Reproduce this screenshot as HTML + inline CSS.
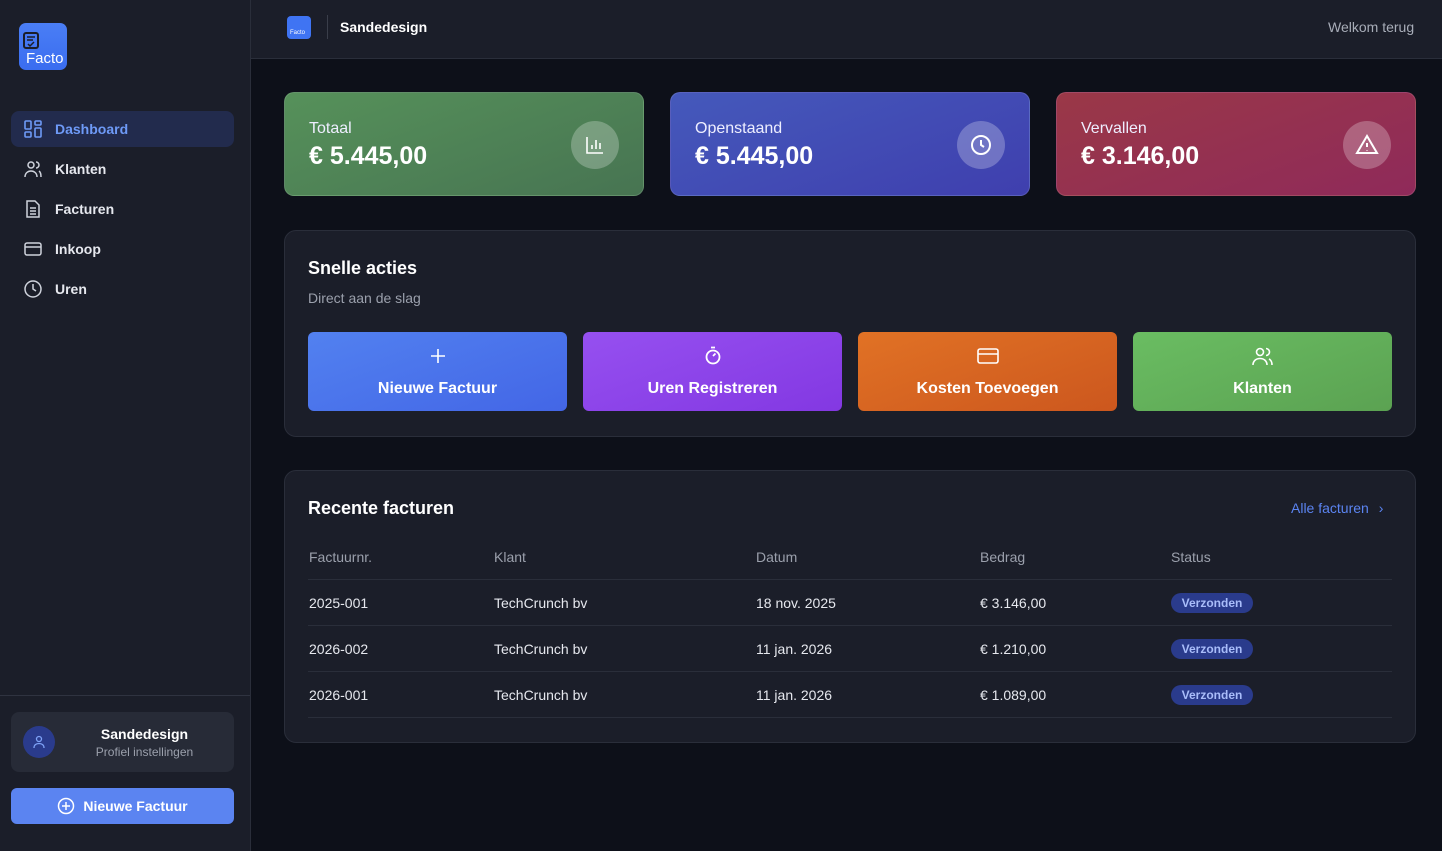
<!DOCTYPE html>
<html><head><meta charset="utf-8"><style>
*{box-sizing:border-box;margin:0;padding:0}
body{width:1442px;height:851px;background:#0d1019;font-family:"Liberation Sans",sans-serif;color:#fff;position:relative;overflow:hidden}
.abs{position:absolute}
.side{left:0;top:0;width:251px;height:851px;background:#1b1e29;border-right:1px solid #2a2e3a}
.nav{left:11px;width:223px;height:36px;border-radius:8px;display:flex;align-items:center;padding-left:12px;font-size:14px;font-weight:bold;color:#e6e8ee}
.nav svg{margin-right:12px}
.hdr{left:251px;top:0;width:1191px;height:59px;background:#1b1e29;border-bottom:1px solid #2a2e3a}
.stat{top:92px;width:360px;height:104px;border-radius:10px;border:1px solid rgba(255,255,255,.12)}
.stat .l{position:absolute;left:24px;top:27px;font-size:16px;color:#eef}
.stat .v{position:absolute;left:24px;top:49px;font-size:25px;font-weight:bold}
.stat .ic{position:absolute;right:24px;top:28px;width:48px;height:48px;border-radius:50%;background:rgba(255,255,255,.25);display:flex;align-items:center;justify-content:center}
.panel{left:284px;width:1132px;background:#1b1e29;border:1px solid #2a2e3a;border-radius:12px}
.btn{top:332px;width:259px;height:79px;border-radius:6px;display:flex;flex-direction:column;align-items:center;justify-content:flex-start;padding-top:14px;font-size:16px;font-weight:bold}
.btn svg{margin-bottom:14px}
.th{top:549px;font-size:14px;color:#9ba0ac}
.td{font-size:14px;color:#e6e8ee}
.line{left:308px;width:1084px;height:1px;background:#2a2e3a}
.badge{left:1171px;width:82px;height:20px;border-radius:10px;background:#2a3b8c;color:#a9bdfa;font-size:12px;font-weight:bold;text-align:center;line-height:20px}
</style></head><body>
<div class="abs side"></div>
<div class="abs" style="left:19px;top:23px;width:48px;height:47px;border-radius:7px;background:linear-gradient(#4a7ef5,#3a6df0)">
<svg class="abs" style="left:4px;top:9px" width="16" height="17" viewBox="0 0 16 17"><rect x="1" y="1" width="14" height="15" rx="2" fill="none" stroke="#1b1e29" stroke-width="2"/><path d="M4 5h8M4 8h6M5 12l2 2 4-4" stroke="#1b1e29" stroke-width="1.5" fill="none"/></svg>
<div class="abs" style="left:7px;top:27px;font-size:15px;color:#fff">Facto</div></div>
<div class="abs nav" style="top:111px;background:#222b4d;color:#6e9af7"><svg width="20" height="20" viewBox="0 0 20 20" fill="none" stroke="#6e9af7" stroke-width="1.6"><rect x="2" y="2" width="6" height="8" rx="1"/><rect x="12" y="2" width="6" height="4" rx="1"/><rect x="2" y="13" width="6" height="5" rx="1"/><rect x="12" y="9" width="6" height="9" rx="1"/></svg>Dashboard</div>
<div class="abs nav" style="top:151px"><svg width="20" height="20" viewBox="0 0 20 20" fill="none" stroke="#cfd3dc" stroke-width="1.5"><circle cx="8" cy="6" r="3"/><path d="M2 18c0-4 3-6 6-6s6 2 6 6M13 3a3 3 0 010 6M16 12c1.5 1 2 3 2 6"/></svg>Klanten</div>
<div class="abs nav" style="top:191px"><svg width="20" height="20" viewBox="0 0 20 20" fill="none" stroke="#cfd3dc" stroke-width="1.5"><path d="M4 2h8l4 4v12H4z M7 9h6M7 12h6M7 15h6"/></svg>Facturen</div>
<div class="abs nav" style="top:231px"><svg width="20" height="20" viewBox="0 0 20 20" fill="none" stroke="#cfd3dc" stroke-width="1.5"><rect x="2" y="4" width="16" height="12" rx="2"/><path d="M2 8h16"/></svg>Inkoop</div>
<div class="abs nav" style="top:271px"><svg width="20" height="20" viewBox="0 0 20 20" fill="none" stroke="#cfd3dc" stroke-width="1.5"><circle cx="10" cy="10" r="8"/><path d="M10 5v5l3 2"/></svg>Uren</div>
<div class="abs" style="left:0;top:695px;width:250px;height:1px;background:#2f3340"></div>
<div class="abs" style="left:11px;top:712px;width:223px;height:60px;border-radius:8px;background:#272b37">
<div class="abs" style="left:12px;top:14px;width:32px;height:32px;border-radius:50%;background:#2a3b8c;display:flex;align-items:center;justify-content:center"><svg width="14" height="14" viewBox="0 0 14 14" fill="none" stroke="#7ea2f7" stroke-width="1.3"><circle cx="7" cy="4" r="2.5"/><path d="M2 13c0-3 2-4.5 5-4.5s5 1.5 5 4.5"/></svg></div>
<div class="abs" style="left:44px;width:179px;top:14px;text-align:center;font-size:14px;font-weight:bold">Sandedesign</div>
<div class="abs" style="left:44px;width:179px;top:33px;text-align:center;font-size:12px;color:#9ba0ac">Profiel instellingen</div></div>
<div class="abs" style="left:11px;top:788px;width:223px;height:36px;border-radius:6px;background:#5b84f1;display:flex;align-items:center;justify-content:center;font-size:14px;font-weight:bold"><svg width="18" height="18" viewBox="0 0 18 18" fill="none" stroke="#fff" stroke-width="1.5" style="margin-right:8px"><circle cx="9" cy="9" r="7.5"/><path d="M9 5v8M5 9h8"/></svg>Nieuwe Factuur</div>

<div class="abs hdr"></div>
<div class="abs" style="left:287px;top:16px;width:24px;height:23px;border-radius:4px;background:#3f74f3;font-size:6px;padding:14px 0 0 3px">Facto</div>
<div class="abs" style="left:327px;top:15px;width:1px;height:24px;background:#3a3e4a"></div>
<div class="abs" style="left:340px;top:19px;font-size:14px;font-weight:bold">Sandedesign</div>
<div class="abs" style="left:1328px;top:19px;font-size:14px;color:#a8adb8">Welkom terug</div>

<div class="abs stat" style="left:284px;background:linear-gradient(160deg,#56915a,#477452)"><div class="l">Totaal</div><div class="v">€ 5.445,00</div><div class="ic"><svg width="22" height="22" viewBox="0 0 22 22" fill="none" stroke="#fff" stroke-width="1.6"><path d="M3 3v16h16M8 15v-4M12 15V6M16 15v-6"/></svg></div></div>
<div class="abs stat" style="left:670px;background:linear-gradient(160deg,#4559bb,#3f3fae)"><div class="l">Openstaand</div><div class="v">€ 5.445,00</div><div class="ic"><svg width="24" height="24" viewBox="0 0 24 24" fill="none" stroke="#fff" stroke-width="2"><circle cx="12" cy="12" r="9"/><path d="M12 7v5l3 2"/></svg></div></div>
<div class="abs stat" style="left:1056px;background:linear-gradient(160deg,#9a3847,#8f2a5a)"><div class="l">Vervallen</div><div class="v">€ 3.146,00</div><div class="ic"><svg width="24" height="24" viewBox="0 0 24 24" fill="none" stroke="#fff" stroke-width="2"><path d="M12 3L2 20h20z M12 10v4M12 17v.5"/></svg></div></div>

<div class="abs panel" style="top:230px;height:207px"></div>
<div class="abs" style="left:308px;top:258px;font-size:18px;font-weight:bold">Snelle acties</div>
<div class="abs" style="left:308px;top:290px;font-size:14px;color:#9ba0ac">Direct aan de slag</div>
<div class="abs btn" style="left:308px;background:linear-gradient(160deg,#5281f0,#4366e6)"><svg width="20" height="20" viewBox="0 0 20 20" stroke="#fff" stroke-width="1.6"><path d="M10 3v14M3 10h14"/></svg>Nieuwe Factuur</div>
<div class="abs btn" style="left:583px;background:linear-gradient(160deg,#9650f0,#8338e2)"><svg width="20" height="20" viewBox="0 0 20 20" fill="none" stroke="#fff" stroke-width="1.8"><path d="M8 1.5h4M10 10l2.5-2.5"/><circle cx="10" cy="11" r="6.5"/></svg>Uren Registreren</div>
<div class="abs btn" style="left:858px;background:linear-gradient(160deg,#e17225,#cc571e)"><svg width="22" height="20" viewBox="0 0 22 20" fill="none" stroke="#fff" stroke-width="1.6"><rect x="1" y="3" width="20" height="14" rx="2"/><path d="M1 8h20"/></svg>Kosten Toevoegen</div>
<div class="abs btn" style="left:1133px;background:linear-gradient(160deg,#6abd62,#5ba252)"><svg width="22" height="20" viewBox="0 0 22 20" fill="none" stroke="#fff" stroke-width="1.6"><circle cx="8" cy="6" r="3.5"/><path d="M1 19c0-4 3-6.5 7-6.5s7 2.5 7 6.5M14 2.5a3.5 3.5 0 010 7M17 13c2 1 3 3 3 6"/></svg>Klanten</div>

<div class="abs panel" style="top:470px;height:273px"></div>
<div class="abs" style="left:308px;top:498px;font-size:18px;font-weight:bold">Recente facturen</div>
<div class="abs" style="left:1291px;top:500px;font-size:14px;color:#5b84f1">Alle facturen <span style="margin-left:6px">›</span></div>
<div class="abs th" style="left:309px">Factuurnr.</div><div class="abs th" style="left:494px">Klant</div><div class="abs th" style="left:756px">Datum</div><div class="abs th" style="left:980px">Bedrag</div><div class="abs th" style="left:1171px">Status</div>
<div class="abs line" style="top:579px"></div>
<div class="abs td" style="left:309px;top:595px">2025-001</div><div class="abs td" style="left:494px;top:595px">TechCrunch bv</div><div class="abs td" style="left:756px;top:595px">18 nov. 2025</div><div class="abs td" style="left:980px;top:595px">€ 3.146,00</div><div class="abs badge" style="top:593px">Verzonden</div>
<div class="abs line" style="top:625px"></div>
<div class="abs td" style="left:309px;top:641px">2026-002</div><div class="abs td" style="left:494px;top:641px">TechCrunch bv</div><div class="abs td" style="left:756px;top:641px">11 jan. 2026</div><div class="abs td" style="left:980px;top:641px">€ 1.210,00</div><div class="abs badge" style="top:639px">Verzonden</div>
<div class="abs line" style="top:671px"></div>
<div class="abs td" style="left:309px;top:687px">2026-001</div><div class="abs td" style="left:494px;top:687px">TechCrunch bv</div><div class="abs td" style="left:756px;top:687px">11 jan. 2026</div><div class="abs td" style="left:980px;top:687px">€ 1.089,00</div><div class="abs badge" style="top:685px">Verzonden</div>
<div class="abs line" style="top:717px"></div>
</body></html>
